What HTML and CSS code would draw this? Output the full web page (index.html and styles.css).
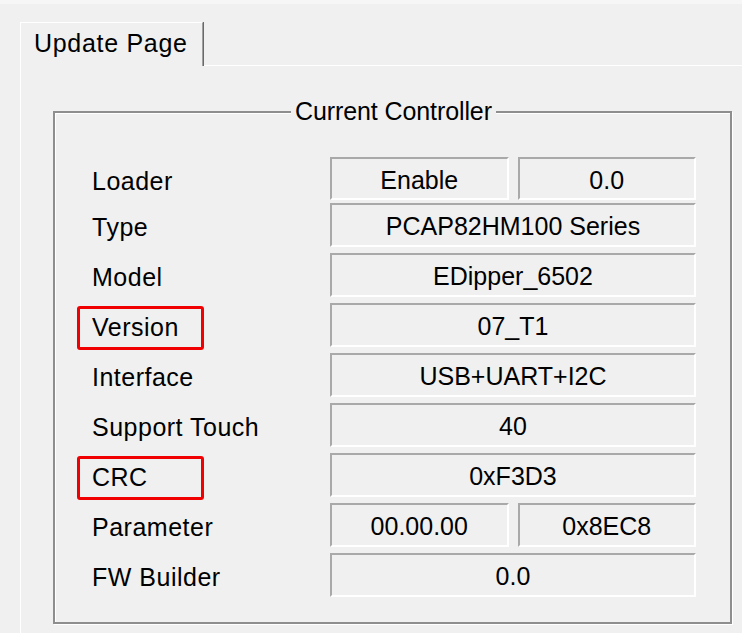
FILE: index.html
```html
<!DOCTYPE html>
<html>
<head>
<meta charset="utf-8">
<link rel="stylesheet" href="styles.css">
</head>
<body>
<div class="window">
  <div class="tabstrip">
    <div class="tab">Update Page</div>
    <div class="tab-fill"></div>
  </div>
  <div class="panel">
    <div class="group">
      <div class="group-title">Current Controller</div>
      <div class="rows">
        <div class="row first">
          <div class="label">Loader</div>
          <div class="values split">
            <div class="box">Enable</div>
            <div class="box">0.0</div>
          </div>
        </div>
        <div class="row">
          <div class="label">Type</div>
          <div class="values"><div class="box">PCAP82HM100 Series</div></div>
        </div>
        <div class="row">
          <div class="label">Model</div>
          <div class="values"><div class="box">EDipper_6502</div></div>
        </div>
        <div class="row">
          <div class="label mark">Version</div>
          <div class="values"><div class="box">07_T1</div></div>
        </div>
        <div class="row">
          <div class="label">Interface</div>
          <div class="values"><div class="box">USB+UART+I2C</div></div>
        </div>
        <div class="row">
          <div class="label">Support Touch</div>
          <div class="values"><div class="box">40</div></div>
        </div>
        <div class="row">
          <div class="label mark">CRC</div>
          <div class="values"><div class="box">0xF3D3</div></div>
        </div>
        <div class="row">
          <div class="label">Parameter</div>
          <div class="values split">
            <div class="box">00.00.00</div>
            <div class="box">0x8EC8</div>
          </div>
        </div>
        <div class="row">
          <div class="label">FW Builder</div>
          <div class="values"><div class="box">0.0</div></div>
        </div>
      </div>
    </div>
  </div>
</div>
</body>
</html>
```
FILE: styles.css
```css
html, body {
  margin: 0;
  padding: 0;
  background: #f0f0f0;
}
body {
  font-family: "Liberation Sans", Arial, sans-serif;
  font-size: 25px;
  color: #000;
  border-top: 4px solid #f6f6f6;
  height: 633px;
  box-sizing: border-box;
  overflow: hidden;
}
.window {
  padding: 18px 0 0 20px;
}
.tabstrip {
  display: flex;
  height: 44px;
}
.tab {
  width: 183px;
  box-sizing: border-box;
  border-top: 1px solid #fff;
  border-left: 1px solid #fff;
  border-right: 1px solid #a0a0a0;
  box-shadow: 1px 0 0 #696969;
  padding-left: 13px;
  line-height: 40px;
  letter-spacing: 0.7px;
}
.tab-fill {
  flex: 1;
  border-bottom: 1px solid #fff;
  margin-left: 1px;
}
.panel {
  border-left: 1px solid #fff;
  padding: 45px 0 0 32px;
  height: 567px;
  box-sizing: border-box;
}
.group {
  width: 679px;
  height: 513px;
  box-sizing: border-box;
  border: 2px solid #8e8e8e;
  box-shadow: inset 1px 1px 0 #fff, 1px 1px 0 #fff;
}
.group-title {
  display: table;
  margin: -16px 0 0 236px;
  padding: 0 4px;
  background: #f0f0f0;
  line-height: 28px;
  letter-spacing: -0.1px;
}
.rows {
  margin-top: 32px;
  padding-left: 22px;
}
.row {
  display: flex;
  align-items: flex-start;
  height: 44px;
  margin-bottom: 6px;
}
.row.first {
  height: 43px;
  margin-bottom: 3px;
}
.label {
  width: 127px;
  height: 44px;
  box-sizing: border-box;
  flex: none;
  border: 3px solid transparent;
  border-radius: 3px;
  margin-top: 3px;
  padding-left: 12px;
  line-height: 37px;
  white-space: nowrap;
  letter-spacing: 0.5px;
}
.label.mark {
  border-color: #f00000;
}
.values {
  margin-left: 126px;
  width: 366px;
  height: 100%;
  display: grid;
  grid-template-columns: 1fr;
}
.values.split {
  grid-template-columns: 1fr 1fr;
  column-gap: 9px;
}
.box {
  box-sizing: border-box;
  height: 100%;
  border-top: 2px solid #a9a9a9;
  border-left: 2px solid #a9a9a9;
  border-bottom: 2px solid #fff;
  border-right: 2px solid #fff;
  padding-top: 3px;
  line-height: 37px;
  text-align: center;
  white-space: nowrap;
  overflow: hidden;
}
```
